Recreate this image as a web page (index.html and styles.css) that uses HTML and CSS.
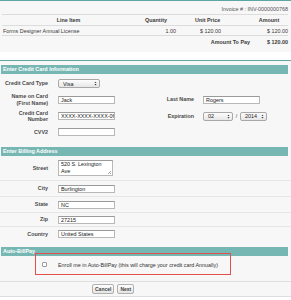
FILE: index.html
```html
<!DOCTYPE html>
<html>
<head>
<meta charset="utf-8">
<link rel="stylesheet" href="styles.css">
</head>
<body>
<div class="page">
  <div class="invoice">
    <div class="invoice-no">Invoice # : INV-0000000768</div>
    <div class="inv-row inv-head">
      <div class="c1 center">Line Item</div>
      <div class="c2 center">Quantity</div>
      <div class="c3 up-head">Unit Price</div>
      <div class="c4 center">Amount</div>
    </div>
    <div class="inv-row inv-item">
      <div class="c1">Forms Designer Annual License</div>
      <div class="c2 right">1.00</div>
      <div class="c3 up-data">$ 120.00</div>
      <div class="c4 right">$ 120.00</div>
    </div>
    <div class="inv-row inv-total">
      <div class="c1"></div>
      <div class="c2"></div>
      <div class="c3 right bold">Amount To Pay</div>
      <div class="c4 right bold">$ 120.00</div>
    </div>
  </div>
  <div class="strip"></div>

  <div class="panel">
    <div class="bar">Enter Credit Card Information</div>
    <div class="cc-grid">
      <div class="lbl">Credit Card Type</div>
      <div class="fld"><div class="sel sel-type"><span>Visa</span><svg class="arr" viewBox="0 0 4 6"><path d="M2 0.5 L3.5 2.3 H0.5Z M2 5.5 L3.5 3.7 H0.5Z" fill="#444"/></svg></div></div>
      <div class="lbl2"></div>
      <div class="fld2"></div>

      <div class="lbl">Name on Card<br>(First Name)</div>
      <div class="fld"><div class="inp">Jack</div></div>
      <div class="lbl2">Last Name</div>
      <div class="fld2"><div class="inp">Rogers</div></div>

      <div class="lbl">Credit Card<br>Number</div>
      <div class="fld"><div class="inp">XXXX-XXXX-XXXX-06</div></div>
      <div class="lbl2">Expiration</div>
      <div class="fld2 exp">
        <div class="sel sel-mo"><span>02</span><svg class="arr" viewBox="0 0 4 6"><path d="M2 0.5 L3.5 2.3 H0.5Z M2 5.5 L3.5 3.7 H0.5Z" fill="#444"/></svg></div>
        <span class="slash">/</span>
        <div class="sel sel-yr"><span>2014</span><svg class="arr" viewBox="0 0 4 6"><path d="M2 0.5 L3.5 2.3 H0.5Z M2 5.5 L3.5 3.7 H0.5Z" fill="#444"/></svg></div>
      </div>

      <div class="lbl">CVV2</div>
      <div class="fld"><div class="inp"></div></div>
      <div class="lbl2"></div>
      <div class="fld2"></div>
    </div>

    <div class="bar">Enter Billing Address</div>
    <div class="addr">
      <div class="arow arow-street">
        <div class="lbl">Street</div>
        <div class="fld"><div class="ta">520 S. Lexington Ave<span class="grip"></span></div></div>
      </div>
      <div class="arow">
        <div class="lbl">City</div>
        <div class="fld"><div class="inp">Burlington</div></div>
      </div>
      <div class="arow">
        <div class="lbl">State</div>
        <div class="fld"><div class="inp">NC</div></div>
      </div>
      <div class="arow arow-short">
        <div class="lbl">Zip</div>
        <div class="fld"><div class="inp">27215</div></div>
      </div>
      <div class="arow arow-short arow-last">
        <div class="lbl">Country</div>
        <div class="fld"><div class="inp">United States</div></div>
      </div>
    </div>

    <div class="abp">
      <div class="bar">Auto-BillPay</div>
      <div class="enroll">
        <span class="cb"></span>
        <span class="enroll-text">Enroll me in Auto-BillPay (this will charge your credit card Annually)</span>
      </div>
      <div class="highlight"></div>
    </div>

    <div class="buttons">
      <span class="btn">Cancel</span>
      <span class="btn">Next</span>
    </div>
  </div>
</div>
</body>
</html>
```
FILE: styles.css
```css
* { box-sizing: border-box; }
html, body { margin: 0; padding: 0; }
body {
  background: #ffffff;
  font-family: "Liberation Sans", Arial, sans-serif;
  font-size: 5.4px;
  color: #3a3a3a;
  width: 291px;
}
.page { border-top: 1px solid #5ea6a2; }

.invoice {
  background: #f7f7f7;
  padding: 0 3px 5px 2px;
}
.invoice-no {
  height: 14px;
  line-height: 14px;
  padding-top: 1px;
  text-align: right;
  border-bottom: 1px solid #dcdcdc;
  color: #555;
}
.inv-row {
  display: grid;
  grid-template-columns: 132px 44px 72px 38px;
  align-items: center;
}
.inv-head { height: 11px; border-bottom: 1px solid #dcdcdc; font-weight: bold; }
.inv-item { height: 10px; border-bottom: 1px solid #dcdcdc; }
.inv-total { height: 11px; }
.center { text-align: center; }
.right { text-align: right; }
.bold { font-weight: bold; }
.c1 { padding-left: 1px; }
.c2.right { padding-right: 2px; }
.up-head { padding-left: 17px; }
.up-data { padding-left: 22px; }

.strip { height: 8px; background: #fff; }

.panel {
  background: #f7f7f7;
  border-top: 1px solid #5ea6a2;
  padding-top: 4px;
}
.bar {
  height: 9px;
  line-height: 9px;
  margin: 0 3px 0 1px;
  padding-left: 2px;
  background: #77b7b3;
  color: #fff;
  font-weight: bold;
}

.cc-grid {
  display: grid;
  grid-template-columns: 48px 100px 46px 1fr;
  grid-template-rows: 17px 15px 18px 14px;
  align-items: center;
  padding-top: 1px;
  padding-bottom: 8px;
}
.lbl, .lbl2 {
  text-align: right;
  font-weight: bold;
  color: #4a4a4a;
  line-height: 1.15;
}
.fld { padding-left: 10px; }
.fld2 { padding-left: 9px; }
.inp {
  width: 57px;
  height: 8px;
  line-height: 6px;
  background: #fff;
  border: 1px solid #b8b8b8;
  border-top-color: #9a9a9a;
  padding: 0 2px;
  white-space: nowrap;
  overflow: hidden;
  color: #222;
}
.sel {
  display: flex;
  align-items: center;
  justify-content: space-between;
  height: 9px;
  border: 1px solid #a8a8a8;
  border-radius: 2px;
  background: linear-gradient(#fdfdfd, #e6e6e6);
  padding: 0 2px 0 4px;
  color: #222;
}
.arr { width: 3px; height: 5px; }
.sel-type { width: 42px; }
.sel-mo { width: 30px; }
.sel-yr { width: 27px; }
.exp { display: flex; align-items: center; }
.slash { width: 7px; text-align: center; color: #444; }

.addr { padding-bottom: 6px; }
.arow {
  display: grid;
  grid-template-columns: 48px 1fr;
  align-items: center;
  height: 16px;
  border-bottom: 1px solid #e6e6e6;
}
.arow-street { height: 25px; }
.arow-short { height: 14px; }
.arow-last { border-bottom: none; }
.ta {
  position: relative;
  width: 55px;
  height: 16px;
  background: #fff;
  border: 1px solid #b8b8b8;
  border-top-color: #9a9a9a;
  padding: 0 2px;
  line-height: 6.5px;
  color: #222;
}
.grip {
  position: absolute;
  right: 1px;
  bottom: 1px;
  width: 3px;
  height: 3px;
  background: linear-gradient(135deg, transparent 45%, #aaa 45%, #aaa 55%, transparent 55%, transparent 75%, #aaa 75%);
}

.abp { position: relative; }
.enroll {
  display: flex;
  align-items: center;
  height: 26px;
  padding-left: 42px;
  padding-bottom: 8px;
  border-bottom: 1px solid #dedede;
}
.cb {
  width: 5px;
  height: 5px;
  border: 1px solid #9a9a9a;
  border-radius: 1px;
  background: #fff;
  margin-right: 11px;
}
.enroll-text { color: #333; }
.highlight {
  position: absolute;
  left: 35px;
  top: 6px;
  width: 196px;
  height: 22px;
  border: 1px solid #e2504c;
  pointer-events: none;
}

.buttons {
  display: flex;
  gap: 3px;
  padding-left: 92px;
  height: 15px;
  align-items: center;
  border-bottom: 1px solid #dedede;
}
.btn {
  height: 10px;
  line-height: 8px;
  padding: 0 2px;
  border: 1px solid #b0b0b0;
  border-radius: 2px;
  background: linear-gradient(#ffffff, #e4e4e4);
  font-weight: bold;
  font-size: 5px;
  color: #444;
}
```
